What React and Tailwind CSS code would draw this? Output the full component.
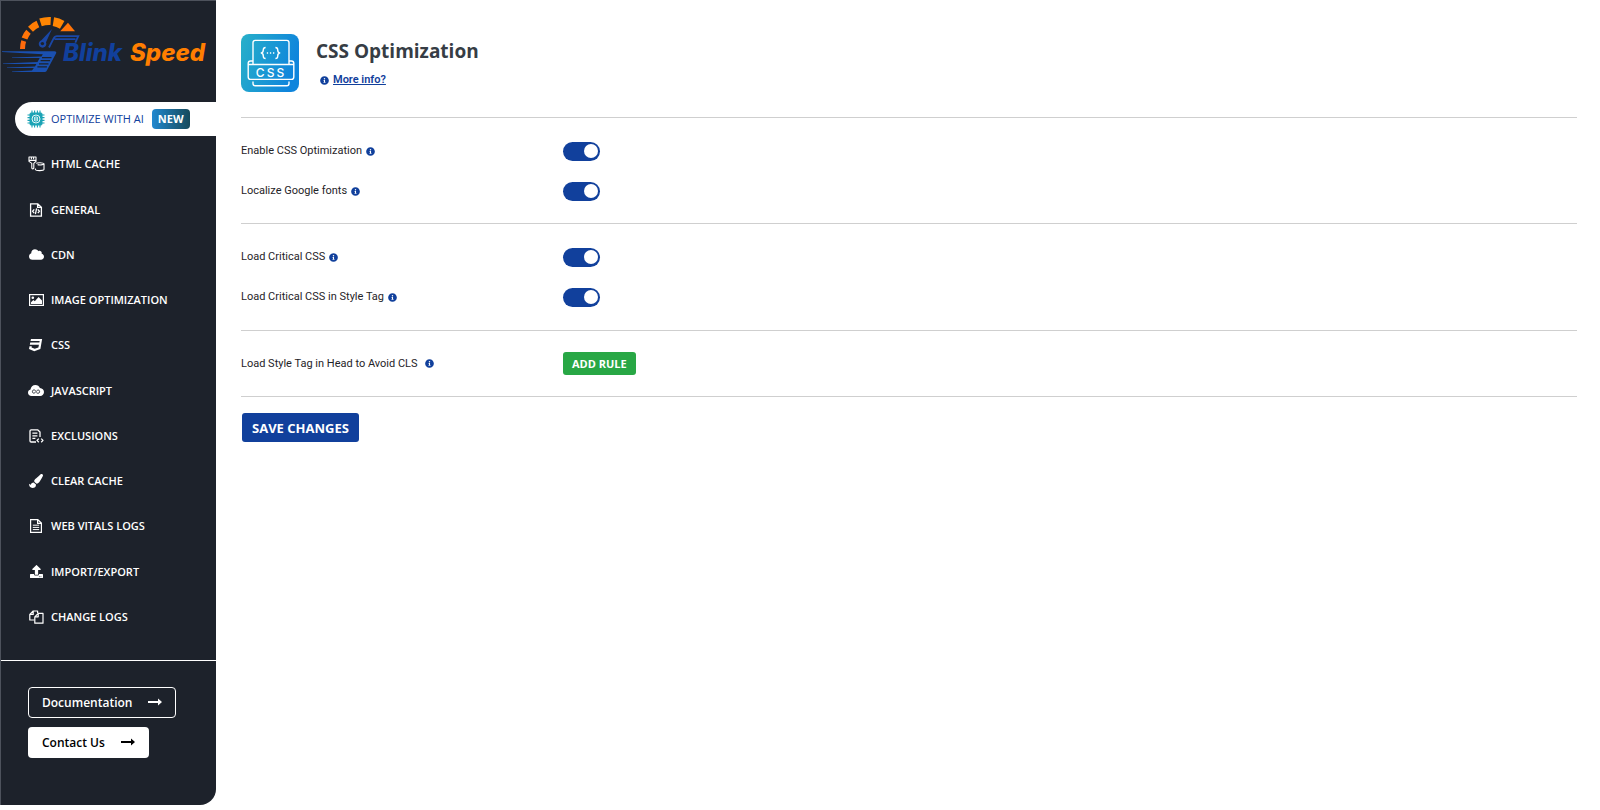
import React, { useState } from 'react';
import { FaCloud, FaCss3, FaPaintBrush, FaUpload, FaInfoCircle } from 'react-icons/fa';

const AiIcon = () => (
    <svg viewBox="0 0 18 18" className="h-[18px] w-[18px]" fill="none" stroke="#1ba3b5">
        <path d="M5 .5v17M7.600.5v17M10.400.5v17M13 .5v17M.5 5h17M.5 7.600h17M.5 10.400h17M.5 13h17" strokeWidth="1.100" />
        <rect x="3" y="3" width="12" height="12" rx="1" fill="#1ba3b5" />
        <circle cx="9" cy="9" r="4" fill="#1ba3b5" stroke="#e4f7f9" strokeWidth="1" />
        <path d="M9 6.200v5.600M7.600 7v4M10.400 7v4" stroke="#e4f7f9" strokeWidth=".9" />
    </svg>
);

const HtmlCacheIcon = () => (
    <svg viewBox="0 0 17 17" className="h-[17px] w-[17px]" fill="none" stroke="currentColor" strokeWidth="1.1" strokeLinejoin="round">
        <path d="M1 1h7v4.400L5.800 7.400v4.600c0 1.200-2 1.200-2 0V7.400L1 5.400zM3.400 1v2.200M5.600 1v2.200M1 4.400h7" />
        <path d="M8.200 7.400c.8-1 7-1 7.800.4v5.600c-.4 1.600-8 1.600-8.600.2v-1.200M9.600 8.600c2 .6 5.400.4 6.400-.8" />
    </svg>
);

const FileCodeIcon = () => (
    <svg viewBox="0 0 14 14" className="h-[14px] w-[14px]" fill="none" stroke="currentColor" strokeWidth="1.3">
        <path d="M1.6.8h7.2l3.6 3.4v9H1.6zM8.6.8v3.6h3.8" />
        <path d="M5.200 6.400L3.600 8.300l1.600 1.900M8.800 6.400l1.600 1.900-1.600 1.900M7.600 5.400L6.400 11.200" />
    </svg>
);

const ImageIcon = () => (
    <svg viewBox="0 0 15 12" className="h-[12px] w-[15px]">
        <rect x=".6" y=".6" width="13.8" height="10.8" fill="none" stroke="currentColor" strokeWidth="1.2" />
        <circle cx="3.8" cy="3.8" r="1.3" fill="currentColor" />
        <path d="M2 10V8.2L4.4 6l1.4 1.2L9.6 3 13 6.6V10z" fill="currentColor" />
    </svg>
);

const JsIcon = () => (
    <svg viewBox="0 0 16 11" className="h-[11px] w-[16px]">
        <path d="M3.6 11C1.4 11 0 9.6 0 7.7c0-1.7 1-2.8 2.5-3.2C2.8 1.9 4.800 0 7.400 0c2.200 0 3.800 1.100 4.500 3.100 2.400.2 4.100 1.800 4.100 4 0 2.400-1.600 3.900-3.800 3.900z" fill="currentColor" />
        <path d="M7.600 5.600c-1-1-3.200-1-3.200 1s2.200 2 3.600 0 3.600-2 3.600 0-2.200 2-3.200 1" fill="none" stroke="#1d222b" strokeWidth=".9" />
    </svg>
);

const ExclusionIcon = () => (
    <svg viewBox="0 0 15 14" className="h-[14px] w-[15px]" fill="none" stroke="currentColor" strokeWidth="1.3" strokeLinejoin="round">
        <path d="M7 13H2.200C1.400 13 1 12.600 1 12V2C1 1.300 1.400.8 2.200.8H8.600L11 3v5" />
        <path d="M3.400 4.200h5M3.400 6.800h5M3.400 9.400h3" />
        <path d="M9.800 9.600L8 11.400l1.800 1.800M12.200 9.600l1.800 1.800-1.800 1.800" />
    </svg>
);

const FileTextIcon = () => (
    <svg viewBox="0 0 14 14" className="h-[14px] w-[14px]" fill="none" stroke="currentColor" strokeWidth="1.2">
        <path d="M1.600.7h7.200l3.600 3.400v9.200H1.600zM8.600.7v3.600h3.800" />
        <path d="M3.800 6.200h6.400M3.800 8.400h6.400M3.800 10.600h6.400" strokeWidth="1" />
    </svg>
);

const FilesIcon = () => (
    <svg viewBox="0 0 15 14" className="h-[14px] w-[15px]" fill="none" stroke="currentColor" strokeWidth="1.2" strokeLinejoin="round">
        <path d="M5.400 10H.8V4.400L4.200 1h4.400v2M4.200 1v3.400H.8" />
        <path d="M9.200 3.400H14V13.200H5.800V6.800zM9.200 3.400v3.400H5.800" />
    </svg>
);

const ArrowIcon = () => (
    <svg viewBox="0 0 14 10" className="h-[10px] w-[14px]">
        <path d="M0 3.100h10V.6L14 4l-4 3.400V4.900H0z" fill="currentColor" />
    </svg>
);

const Logo = () => (
    <svg viewBox="1 1 215 90" className="block h-[90px] w-full" role="img" aria-label="Blink Speed">
        <g fill="none" strokeWidth="7">
            <path d="M22.500 49c0-3.400.4-5.600 1.200-8" stroke="#ff6a0c" strokeWidth="5" />
            <path d="M24.500 38.500c1-2.800 2.200-4.800 4-6.800" stroke="#ff7408" strokeWidth="6" />
            <path d="M30.500 29.200c2.200-2.200 4.600-4 7.400-5.200" stroke="#ff7d05" />
            <path d="M40.500 22.400c3.400-1.100 6.600-1.500 10.200-1.300" stroke="#ff8603" strokeWidth="8" />
            <path d="M53.400 21.600c3.200.5 6 1.600 8.800 3.200" stroke="#ff8603" strokeWidth="9" />
        </g>
        <path d="M68 22.800l7 8.400H60.200z" fill="#ff7408" />
        <path d="M52 29l-6 13.200a3.800 3.800 0 1 1-4.600-2z" fill="#1a47a6" />
        <circle cx="42.400" cy="43.600" r="1.700" fill="#1d222b" />
        <path d="M49 47.500l4.400-8.600c.9-1.800 1.800-2.700 3.600-2.700h21.300l-3 6.500M54.500 39.200h21" fill="none" stroke="#1a47a6" strokeWidth="1.800" />
        <path d="M2 51.200h52.500c1.600 0 2.200 1 1.500 2.300L47 70.200c-.8 1.400-1.500 1.900-3 1.900H12v-.6l20-.9 1.800-2.600H7v-.6l28-.9 1.400-2.500H3v-.6l34.500-1.300 2.200-4H12v-.6l29.500-1 1.300-2.300L2 51.900z" fill="#1a50b0" />
        <path d="M42 57.600h9.500M40.600 60.700h9.500M39 63.800h9.500M37.400 66.900h9.500" stroke="#1d222b" strokeWidth="1.200" />
        <text x="63" y="61" fontFamily="Inter, sans-serif" fontSize="24" fontWeight="800" fontStyle="italic">
            <tspan fill="#11409c">Blink</tspan>
            <tspan x="130" fill="#ff7e00">Speed</tspan>
        </text>
    </svg>
);

const CssBadge = () => (
    <svg viewBox="0 0 58 58" className="h-[58px] w-[58px] shrink-0" fill="none" stroke="#ffffff" strokeWidth="1.400" strokeLinejoin="round">
        <defs>
            <linearGradient id="badge" x1="0" y1="0" x2="1" y2="0.300">
                <stop offset="0" stopColor="#28b0c9" />
                <stop offset="1" stopColor="#0f85dc" />
            </linearGradient>
        </defs>
        <rect width="58" height="58" rx="8" fill="url(#badge)" stroke="none" />
        <path d="M12 30.500V8.600c0-1.400.8-2.200 2.200-2.200h31.600c1.400 0 2.200.8 2.200 2.200v21.900" />
        <path d="M12 27H9.500c-1.500 0-2.300.8-2.300 2.200V43c0 1.600.8 2.400 2.300 2.400h41c1.500 0 2.300-.8 2.300-2.400V29.200c0-1.400-.8-2.200-2.300-2.200H48M7.200 30.500h45.600" />
        <path d="M12 47.500v2c0 1.400.8 2.200 2.200 2.200h31.600c1.400 0 2.200-.8 2.200-2.200v-2" />
        <path d="M24.600 13.500c-2 0-2.300.8-2.300 2.300 0 1.900-.3 2.900-2 3.200 1.700.3 2 1.300 2 3.200 0 1.500.3 2.300 2.300 2.300M34.400 13.500c2 0 2.300.8 2.300 2.300 0 1.900.3 2.900 2 3.200-1.700.3-2 1.300-2 3.200 0 1.500-.3 2.300-2.300 2.300" />
        <path d="M25.800 19h1.300M28.900 19h1.300M32 19h1.300" />
        <text x="30" y="42.500" textAnchor="middle" fill="#ffffff" stroke="none" fontFamily="Inter, sans-serif" fontSize="12" fontWeight="500" letterSpacing="2">CSS</text>
    </svg>
);

const menuItems = [
    { label: 'HTML CACHE', icon: <HtmlCacheIcon /> },
    { label: 'GENERAL', icon: <FileCodeIcon /> },
    { label: 'CDN', icon: <FaCloud size={15} /> },
    { label: 'IMAGE OPTIMIZATION', icon: <ImageIcon /> },
    { label: 'CSS', icon: <FaCss3 size={14} /> },
    { label: 'JAVASCRIPT', icon: <JsIcon /> },
    { label: 'EXCLUSIONS', icon: <ExclusionIcon /> },
    { label: 'CLEAR CACHE', icon: <FaPaintBrush size={14} /> },
    { label: 'WEB VITALS LOGS', icon: <FileTextIcon /> },
    { label: 'IMPORT/EXPORT', icon: <FaUpload size={13} /> },
    { label: 'CHANGE LOGS', icon: <FilesIcon /> },
];

const Info = () => <FaInfoCircle size={9} className="shrink-0 text-[#11409c]" />;

const ToggleRow = ({ id, label }) => {
    const [checked, setChecked] = useState(true);

    return (
        <div className="flex h-10 items-center">
            <div className="flex w-[322px] items-center gap-1">
                <label htmlFor={id}>{label}</label>
                <Info />
            </div>
            <input
                id={id}
                type="checkbox"
                checked={checked}
                onChange={(e) => setChecked(e.target.checked)}
                className="flex h-[19px] w-[37px] appearance-none items-center rounded-full bg-gray-300 px-[2px] before:h-[14px] before:w-[14px] before:rounded-full before:bg-white checked:justify-end checked:bg-[#11409c]"
            />
        </div>
    );
};

const App = () => {
    return (
        <div className="flex min-h-screen items-start bg-white font-['Open_Sans','Noto_Sans',sans-serif] text-[11px] leading-4 text-[#1f2328]">
            <aside className="w-[216px] shrink-0 rounded-br-[16px] border-t border-l border-[#4d525c] bg-[#1d222b] pb-[47px]">
                <Logo />
                <nav className="mt-[11px] flex h-[532px] flex-col justify-between font-semibold text-white">
                    <a href="#optimize" className="ml-[14px] flex h-[34px] shrink-0 items-center rounded-l-full bg-white pl-[11px] font-normal text-[#11409c]">
                        <span className="flex w-5 justify-center"><AiIcon /></span>
                        <span className="ml-[5px]">OPTIMIZE WITH AI</span>
                        <span className="ml-2 rounded bg-linear-to-r from-[#2189d0] to-[#164a5c] px-[6px] py-[2px] font-bold text-white">NEW</span>
                    </a>
                    {menuItems.map((item) => (
                        <a key={item.label} href="#menu" className="flex h-[34px] items-center pl-[25px]">
                            <span className="flex w-5 justify-center">{item.icon}</span>
                            <span className="ml-[5px]">{item.label}</span>
                        </a>
                    ))}
                </nav>
                <div className="mt-[26px] flex flex-col items-start gap-[9px] border-t border-white pt-[26px] pl-[27px] text-[12px] font-semibold">
                    <a href="#documentation" className="flex h-[31px] items-center gap-4 rounded border border-white px-[13px] text-white">
                        Documentation <ArrowIcon />
                    </a>
                    <a href="#contact" className="flex h-[31px] items-center gap-4 rounded bg-white px-[14px] text-black">
                        Contact Us <ArrowIcon />
                    </a>
                </div>
            </aside>
            <main className="min-w-0 flex-1 pt-[34px] pr-[23px] pl-[25px]">
                <header className="flex gap-[17px] border-b border-[#cfcfcf] pb-[25px]">
                    <CssBadge />
                    <div>
                        <h1 className="pt-[3px] text-[19px] leading-7 font-bold text-[#363d45]">CSS Optimization</h1>
                        <a href="#info" className="mt-[7px] ml-1 flex items-center gap-1 font-[Roboto,sans-serif] font-semibold text-[#11409c]">
                            <Info /> <span className="underline">More info?</span>
                        </a>
                    </div>
                </header>
                <div className="font-[Roboto,sans-serif]">
                    <section className="border-b border-[#cfcfcf] pt-[13px] pb-3">
                        <ToggleRow id="enable" label="Enable CSS Optimization" />
                        <ToggleRow id="fonts" label="Localize Google fonts" />
                    </section>
                    <section className="border-b border-[#cfcfcf] pt-[13px] pb-[13px]">
                        <ToggleRow id="critical" label="Load Critical CSS" />
                        <ToggleRow id="style" label="Load Critical CSS in Style Tag" />
                    </section>
                    <section className="flex items-center border-b border-[#cfcfcf] pt-[21px] pb-[21px]">
                        <div className="flex w-[322px] items-center gap-[7px]">
                            <span>Load Style Tag in Head to Avoid CLS</span>
                            <Info />
                        </div>
                        <button type="button" className="h-[23px] rounded-[3px] bg-[#28a745] px-[9px] font-['Open_Sans',sans-serif] text-[11px] font-bold text-white">ADD RULE</button>
                    </section>
                </div>
                <button type="button" className="mt-4 ml-px h-[29px] rounded-[3px] bg-[#11409c] px-[10px] text-[13px] font-bold text-white">SAVE CHANGES</button>
            </main>
        </div>
    );
};

export default App;
